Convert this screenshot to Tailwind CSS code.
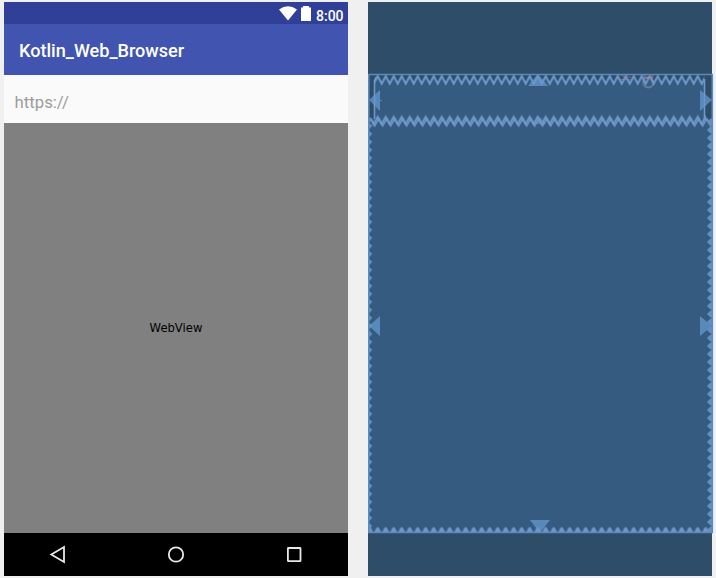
<!DOCTYPE html>
<html lang="en">
<head>
<meta charset="utf-8">
<title>Kotlin_Web_Browser</title>
<script src="https://cdn.jsdelivr.net/npm/@tailwindcss/browser@4"></script>
</head>
<body class="w-[716px] h-[578px] overflow-hidden bg-[#f0f0f0]">
<main class="flex gap-5 pl-1 pt-0.5">
  <section class="w-[344px] h-[574px] flex flex-col shrink-0 font-['Roboto',sans-serif]">
    <div class="h-[22px] bg-[#303f97] flex items-center justify-end pr-[4px] text-white">
      <svg class="w-[18px] h-[15px] mr-[4px]" viewBox="0 0 18 15" fill="#fff"><path d="M0 3.6Q9-3 18 3.6L9 14.5Z"/></svg>
      <svg class="w-[10px] h-[15px] mr-[5px]" viewBox="0 0 10 15" fill="#fff"><path d="M0 1.4H2V0H8V1.4H10V15H0Z"/></svg>
      <span class="text-[14px] leading-[22px] pt-[6px] w-[28px] font-medium whitespace-nowrap">8:00</span>
    </div>
    <header class="h-[51px] bg-[#4054b0] pl-[15px] flex items-center text-white text-[18.1px] font-medium pt-[2px]"><span>Kotlin_Web_Browser</span></header>
    <div class="h-12 bg-[#fafafa] pl-[10.5px] pt-[7px] flex items-center text-[#9b9d9b] text-[16.8px]"><span>https://</span></div>
    <div class="h-[410px] bg-[#808080] flex items-center justify-center pt-px text-black text-[11.6px] font-['DejaVu_Sans',sans-serif]">WebView</div>
    <nav class="h-[43px] bg-black">
      <svg class="w-[344px] h-[43px]" viewBox="4 533 344 43" fill="none" stroke="#e8e8e8" stroke-width="1.8"><path d="M51.3 554.5L64 547V562Z"/><circle cx="176" cy="554.5" r="7.2"/><rect x="287.9" y="548" width="12.6" height="13.2" rx=".5"/></svg>
    </nav>
  </section>
  <section class="w-[344px] h-[574px] bg-[#2e4d69] shrink-0">
    <svg class="block w-[348px] h-[574px]" viewBox="368 2 348 574" fill="none">
      <defs>
        <pattern id="springX" x="373.7" y="74" width="8" height="12" patternUnits="userSpaceOnUse"><path d="M-4 0V2.6L0 9.6L4 2.6L8 9.6L12 2.6V0Z" fill="#2e4d69"/><path d="M-4 2L0 9.8L4 2L8 9.8L12 2" stroke="#6e98c9" stroke-width="2"/></pattern>
        <pattern id="springA" x="373.7" y="114" width="8" height="14" patternUnits="userSpaceOnUse"><path d="M-4 2.8L0 10L4 2.8L8 10L12 2.8" stroke="#6e98c9" stroke-width="1.9"/></pattern>
        <pattern id="springB" x="374.6" y="115" width="8" height="14" patternUnits="userSpaceOnUse"><path d="M-4 3.8L0 10.8L4 3.8L8 10.8L12 3.8" stroke="#6e98c9" stroke-width="1.7"/></pattern>
        <pattern id="edgeL" x="368" y="122" width="6" height="8" patternUnits="userSpaceOnUse"><path d="M0 1.2H1.5L4.3 4L1.5 6.8H0Z" fill="#6490c0"/></pattern>
        <pattern id="edgeR" x="706" y="118" width="6" height="8" patternUnits="userSpaceOnUse"><path d="M6 .6H4.6L1 4L4.6 7.4H6Z" fill="#6490c0"/></pattern>
        <pattern id="edgeB" x="373.7" y="526" width="8" height="6" patternUnits="userSpaceOnUse"><path d="M.9 6V5.3L3.2 1.2H4.8L7.1 5.3V6Z" fill="#6e98c9"/></pattern>
      </defs>
      <path fill="#355b80" d="M374 76H705V119H712V533H368V119H374Z"/>
      <path fill="url(#springX)" d="M374 74H704V86H374Z"/>
      <path d="M610 74.5h22m-14 5h12m-10-5q5 1 6 6m0-6q3 3 5 3" stroke="#9a829b" stroke-opacity=".6"/>
      <g stroke="#8795b3" stroke-opacity=".6" stroke-width="1.8"><circle cx="648.3" cy="82.5" r="5"/><path d="M644.5 74v3.5h8V74" stroke="#a1839a"/></g>
      <path fill="url(#springA)" d="M372 114H706V128H372Z"/>
      <path fill="url(#springB)" d="M369 115H711V129H369Z"/>
      <path fill="url(#edgeL)" d="M368 118H374V532H368Z"/>
      <path fill="url(#edgeR)" d="M706 118H712V532H706Z"/>
      <path fill="url(#edgeB)" d="M368 526H712V532H368Z"/>
      <path d="M374.5 119V80.5L376.5 77M704.5 79V120" stroke="#6e98c9" stroke-width="1.6"/>
      <path fill="#6597cd" fill-opacity=".75" d="M369 100L380 90V111ZM712 100L700 90V111ZM538 74L528 86H548ZM369 326L380 316V336ZM712 326L700 316V336ZM540 533L530 520H550Z"/>
      <path d="M380 100.5h2" stroke="#5987b8"/>
      <path fill="#6e98c9" fill-opacity=".6" d="M540 117L534 124H546Z"/>
      <path d="M368.8 74V533M368 74.5H713M368 532.5H713M712.3 74V533" stroke="#5c8abc" stroke-width="1.6"/>
    </svg>
  </section>
</main>
</body>
</html>
